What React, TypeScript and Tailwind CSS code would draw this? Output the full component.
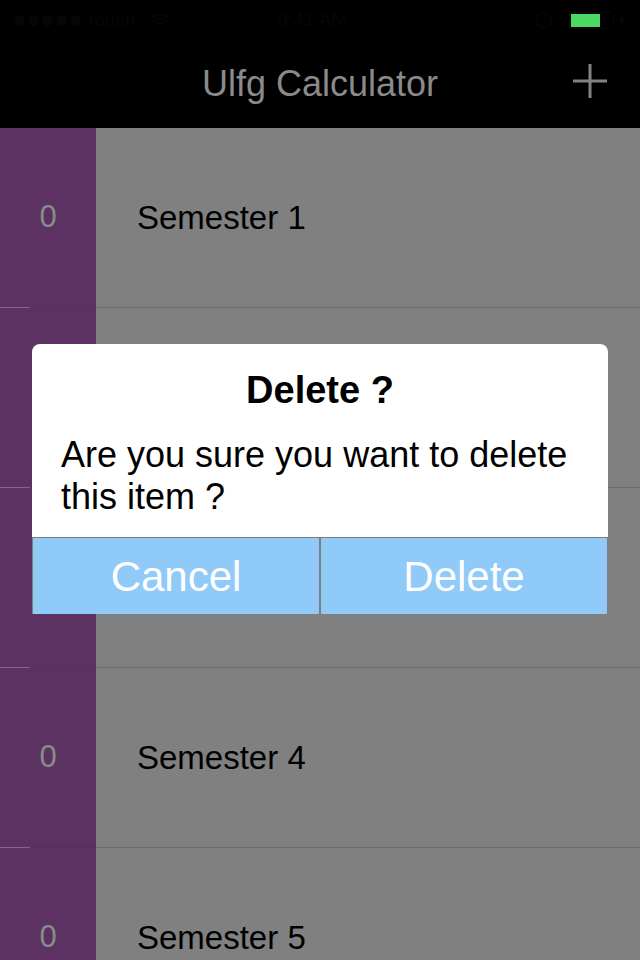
import React from 'react';

const semesters = [1, 2, 3, 4, 5];

const StatusBar: React.FC = () => (
  <div className="h-[40px] bg-black flex items-center px-[14px] text-[#060606] text-[19px]">
    <div className="flex items-center gap-[3px]">
      {[0, 1, 2, 3, 4].map(i => (
        <span key={i} className="w-[11px] h-[11px] rounded-full bg-[#060606]" />
      ))}
    </div>
    <span className="ml-[8px]">touch</span>
    <svg className="ml-[16px]" width="18" height="14" viewBox="0 0 18 14" fill="none" stroke="#060606" strokeWidth="2">
      <path d="M1 5a11 11 0 0 1 16 0M4 8a7 7 0 0 1 10 0M7 11a3 3 0 0 1 4 0" />
    </svg>
    <span className="ml-[108px]">9:41 AM</span>
    <div className="ml-auto flex items-center">
      <span className="w-[17px] h-[17px] rounded-full border-2 border-[#060606]" />
      <div className="ml-[17px] w-[45px] h-[17px] rounded-[3px] border border-[#080808] p-[1px]">
        <div className="w-[29px] h-full bg-[#4cd964]" />
      </div>
      <svg className="ml-[4px]" width="8" height="14" viewBox="0 0 8 14" fill="#060606">
        <path d="M5 0L0 8h3l-1 6 6-9H5z" />
      </svg>
    </div>
  </div>
);

const Row: React.FC<{ n: number }> = ({ n }) => (
  <div>
    <div className="flex h-[179px]">
      <div className="w-[96px] bg-[#5c3262] flex items-center justify-center text-[31px] text-[#8a8a8a]">0</div>
      <div className="flex-1 bg-[#808080] flex items-center pl-[41px] text-[33px] text-black">Semester {n}</div>
    </div>
    <div className="flex h-px">
      <div className="w-[30px] bg-[#7f6a84]" />
      <div className="w-[66px] bg-[#55305b]" />
      <div className="flex-1 bg-[#6b6b6b]" />
    </div>
  </div>
);

const App: React.FC = () => {
  return (
    <div className="relative w-[640px] h-[960px] overflow-hidden bg-[#808080] font-['Liberation_Sans',Arial,sans-serif]">
      <StatusBar />

      {/* Navigation bar */}
      <div className="h-[88px] bg-black grid grid-cols-[1fr_auto_1fr] items-center">
        <div />
        <h1 className="text-[36px] text-[#8a8a8a]">Ulfg Calculator</h1>
        <div className="flex justify-end pr-[33px] pb-[6px]">
          <svg width="34" height="34" viewBox="0 0 34 34" stroke="#828282" strokeWidth="3">
            <path d="M17 0v34M0 17h34" />
          </svg>
        </div>
      </div>

      {semesters.map(n => (
        <Row key={n} n={n} />
      ))}

      {/* Delete dialog */}
      <div className="absolute left-[32px] top-[344px] w-[576px] bg-white rounded-t-[8px] overflow-hidden">
        <div className="pt-[24px] text-center text-[38px] leading-[44px] font-bold text-black">Delete ?</div>
        <p className="px-[29px] pt-[22px] pb-[19px] text-[36px] leading-[42px] text-black">
          Are you sure you want to delete this item ?
        </p>
        <div className="flex border-t border-x border-[#7d7d7d]">
          <button className="flex-1 h-[76px] bg-[#90caf9] text-white text-[42px] leading-[78px]">Cancel</button>
          <button className="flex-1 h-[76px] bg-[#90caf9] text-white text-[42px] leading-[78px] border-l-2 border-[#7d7d7d]">Delete</button>
        </div>
      </div>
    </div>
  );
};

export default App;
